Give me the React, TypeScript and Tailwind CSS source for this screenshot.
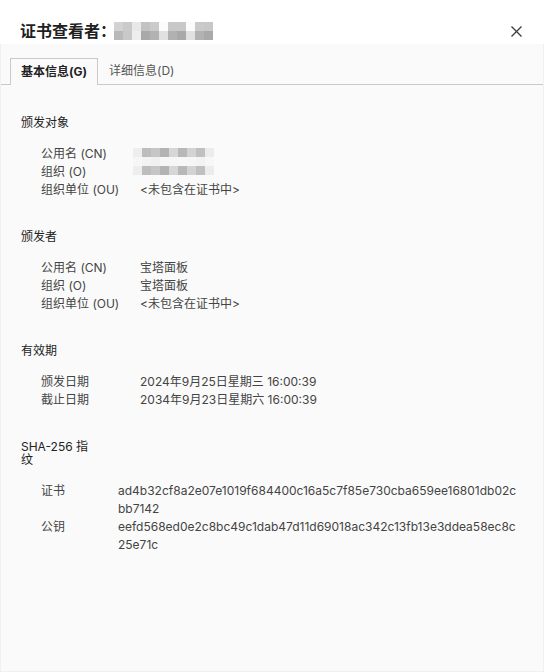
const font = {
  fontFamily: 'Inter, "Noto Sans CJK SC", sans-serif',
};

const titleBlur = [
  ["#d2d2d2", "#cacaca", "#e8e8e8", "#c2c2c2", "#cacaca", "#fbfbfb", "#c8c8c8", "#c8c8c8", "#fbfbfb", "#cacaca", "#c8c8c8"],
  ["#b9b9b9", "#c8c8c8", "#eeeeee", "#a9a9a9", "#b2b2b2", "#e1e1e1", "#b1b1b1", "#a9a9a9", "#e1e1e1", "#b2b2b2", "#a9a9a9"],
];

const subjectBlur = [
  ["#eeeeee", "#bdbdbd", "#c6c6c6", "#b3b3b3", "#d6d6d6", "#b8b8b8", "#d3d3d3", "#c0c0c0", "#ececec"],
  ["#f6f6f6", "#f3f3f3", "#f0f0f0", "#f6f6f6", "#f6f6f6", "#f7f7f7", "#f6f6f6", "#f3f3f3", "#f7f7f7"],
  ["#eeeeee", "#bdbdbd", "#c6c6c6", "#b3b3b3", "#d6d6d6", "#b8b8b8", "#d3d3d3", "#c0c0c0", "#ececec"],
];

function Pixelated({ grid }: { grid: string[][] }) {
  return (
    <div className="flex flex-col">
      {grid.map((row, i) => (
        <div key={i} className="flex">
          {row.map((c, j) => (
            <div key={j} className="w-[9px] h-[9px]" style={{ backgroundColor: c }} />
          ))}
        </div>
      ))}
    </div>
  );
}

function Row({ label, value, labelWidth = "w-[99px]" }: { label: string; value?: React.ReactNode; labelWidth?: string }) {
  return (
    <div className="flex leading-[18px]">
      <div className={`${labelWidth} shrink-0`}>{label}</div>
      <div>{value}</div>
    </div>
  );
}

export default function App() {
  return (
    <div className="w-[544px] h-[672px] bg-white flex flex-col text-[12px]" style={font}>
      {/* title bar */}
      <div className="h-[44px] pt-[19px] pl-[20px] pr-[22px] flex items-start justify-between">
        <div className="flex items-center h-[24px]">
          <span className="text-[16px] font-semibold text-[#1f1f1f] leading-[24px]">证书查看者：</span>
          <div className="-ml-[2px]">
            <Pixelated grid={titleBlur} />
          </div>
        </div>
        <svg width="11" height="11" viewBox="0 0 11 11" className="mt-[7px]">
          <path d="M0.5 0.5 L10.5 10.5 M10.5 0.5 L0.5 10.5" stroke="#3a3a3a" strokeWidth="1.3" />
        </svg>
      </div>

      <div className="flex-1 bg-[#fafafa] border-x border-b border-[#f0f0f0] flex flex-col">
        {/* tabs */}
        <div className="mt-[14px] flex border-b border-[#c9c9c9] h-[27px]">
          <div className="ml-[9px] h-[27px] px-[10px] border border-b-0 border-[#c9c9c9] bg-[#fafafa] flex items-center font-bold text-[#222]">
            基本信息(G)
          </div>
          <div className="h-[26px] px-[11px] flex items-center text-[#555]">详细信息(D)</div>
        </div>

        <div className="px-[20px] text-[#444]">
          {/* 颁发对象 */}
          <div className="mt-[29px] w-[72px] leading-[18px] text-[#222]">颁发对象</div>
          <div className="relative mt-[13px] pl-[20px]">
            <Row label="公用名 (CN)" />
            <Row label="组织 (O)" />
            <Row label="组织单位 (OU)" value="<未包含在证书中>" />
            <div className="absolute left-[112px] top-[3px]">
              <Pixelated grid={subjectBlur} />
            </div>
          </div>

          {/* 颁发者 */}
          <div className="mt-[29px] w-[72px] leading-[18px] text-[#222]">颁发者</div>
          <div className="mt-[13px] pl-[20px]">
            <Row label="公用名 (CN)" value="宝塔面板" />
            <Row label="组织 (O)" value="宝塔面板" />
            <Row label="组织单位 (OU)" value="<未包含在证书中>" />
          </div>

          {/* 有效期 */}
          <div className="mt-[29px] w-[72px] leading-[18px] text-[#222]">有效期</div>
          <div className="mt-[13px] pl-[20px]">
            <Row label="颁发日期" value="2024年9月25日星期三 16:00:39" />
            <Row label="截止日期" value="2034年9月23日星期六 16:00:39" />
          </div>

          {/* 指纹 */}
          <div className="mt-[31px] w-[72px] leading-[13px] text-[#222]">SHA-256 指纹</div>
          <div className="mt-[16px] pl-[20px]">
            <Row
              label="证书"
              labelWidth="w-[77px]"
              value={
                <>
                  <div className="whitespace-nowrap">ad4b32cf8a2e07e1019f684400c16a5c7f85e730cba659ee16801db02c</div>
                  <div>bb7142</div>
                </>
              }
            />
            <Row
              label="公钥"
              labelWidth="w-[77px]"
              value={
                <>
                  <div className="whitespace-nowrap">eefd568ed0e2c8bc49c1dab47d11d69018ac342c13fb13e3ddea58ec8c</div>
                  <div>25e71c</div>
                </>
              }
            />
          </div>
        </div>
      </div>
    </div>
  );
}
